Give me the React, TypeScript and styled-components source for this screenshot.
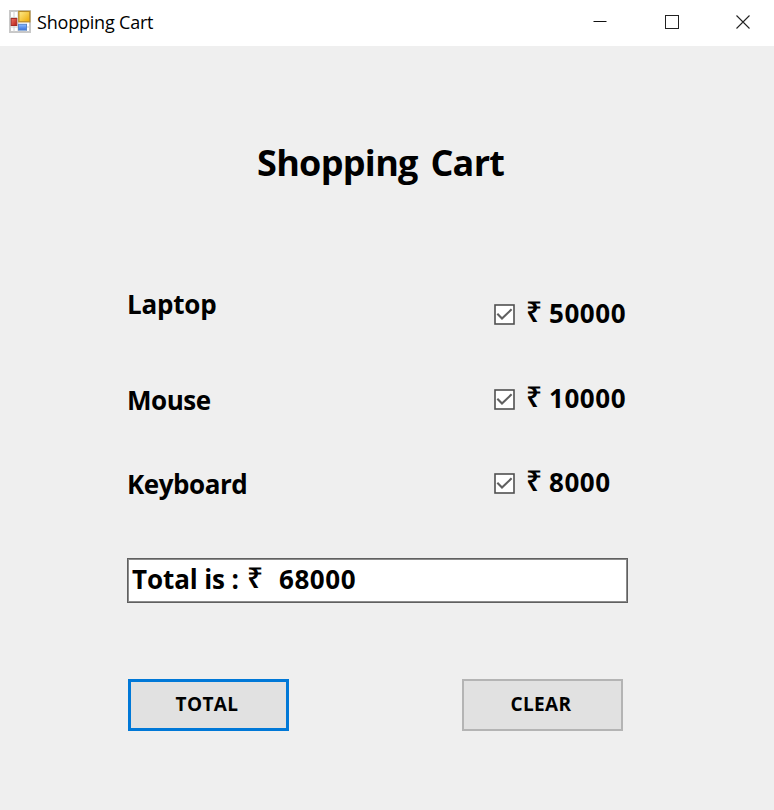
import React, { useState } from "react";
import styled, { createGlobalStyle } from "styled-components";

const GlobalStyle = createGlobalStyle`
  *, *::before, *::after { box-sizing: border-box; }
  body { margin: 0; background: #efefef; }
`;

const Window = styled.div`
  width: 774px;
  height: 810px;
  display: flex;
  flex-direction: column;
  background: #efefef;
  color: #000;
  font-family: "Open Sans", "Noto Sans", sans-serif;
  overflow: hidden;
`;

const TitleBar = styled.header`
  height: 46px;
  flex: none;
  display: flex;
  align-items: center;
  background: #fff;
  padding: 0 0 3px 9px;
`;

const TitleText = styled.span`
  flex: 1;
  margin-left: 6px;
  padding-top: 1px;
  font-size: 18px;
  line-height: 24px;
  letter-spacing: -0.2px;
  white-space: pre;
`;

const WindowControls = styled.div`
  display: flex;
  align-self: stretch;
  margin-right: -5px;
`;

const ControlButton = styled.button`
  width: 71.5px;
  padding: 0;
  border: 0;
  background: transparent;
  display: flex;
  align-items: center;
  justify-content: center;
`;

const Form = styled.main`
  flex: 1;
  display: flex;
  flex-direction: column;
  padding: 92px 146px 0 127px;
`;

const Heading = styled.h1`
  margin: 0 0 0 130px;
  height: 50px;
  font-size: 36px;
  font-weight: 700;
  line-height: 50px;
  letter-spacing: -0.7px;
  word-spacing: 4px;
  white-space: pre;
`;

const Items = styled.section`
  display: flex;
  justify-content: space-between;
  height: 272px;
  margin-top: 98px;
`;

const Column = styled.div<{ $width: number }>`
  width: ${(p) => p.$width}px;
  display: flex;
  flex-direction: column;
`;

const Label = styled.span<{ $gap: number; $spacing: number }>`
  height: 36px;
  margin-top: ${(p) => p.$gap}px;
  font-size: 26px;
  font-weight: 700;
  line-height: 36px;
  letter-spacing: ${(p) => p.$spacing}px;
  white-space: pre;
`;

const PriceRow = styled.label<{ $gap: number }>`
  height: 36px;
  margin-top: ${(p) => p.$gap}px;
  display: flex;
  align-items: center;
`;

const CheckInput = styled.input`
  appearance: none;
  width: 0;
  height: 0;
  margin: 0;
`;

const CheckIcon = styled.svg`
  width: 21px;
  height: 21px;
  flex: none;
  margin: 3px 11px 0 0;
`;

const Rupee = styled.span<{ $width: number }>`
  width: ${(p) => p.$width}px;
  flex: none;
  font-size: 28px;
  font-weight: 600;
  line-height: 33px;
  height: 36px;
`;

const Amount = styled.span`
  font-size: 26px;
  font-weight: 700;
  line-height: 36px;
  letter-spacing: 0.55px;
  white-space: pre;
`;

const TotalBox = styled.output`
  width: 501px;
  height: 45px;
  display: flex;
  align-items: center;
  margin-bottom: 76px;
  padding: 0 0 3px 4px;
  border: 1px solid #606060;
  box-shadow: inset 0 0 0 1px #8c8c8c;
  background: #fff;
`;

const TotalLabel = styled.span`
  width: 115px;
  font-size: 26px;
  font-weight: 700;
  line-height: 36px;
  letter-spacing: -0.1px;
  white-space: pre;
`;

const Actions = styled.div`
  display: flex;
  gap: 173px;
  padding-left: 1px;
`;

const ActionButton = styled.button<{ $primary?: boolean }>`
  width: 161px;
  height: 52px;
  padding: 0 3px 2px 0;
  border: ${(p) => (p.$primary ? "3px solid #0078d7" : "2px solid #b4b4b4")};
  background: #e1e1e1;
  color: #000;
  font-family: inherit;
  font-size: 19px;
  font-weight: 700;
  line-height: 26px;
  letter-spacing: 0.4px;
`;

const AppIcon = () => (
  <svg width="22" height="23" viewBox="0 0 22 23">
    <defs>
      <linearGradient id="gold" x1="0" y1="0" x2="1" y2="1">
        <stop offset="0" stopColor="#ffed91" />
        <stop offset="1" stopColor="#eda800" />
      </linearGradient>
      <linearGradient id="red" x1="0" y1="0" x2="1" y2="1">
        <stop offset="0" stopColor="#ef756a" />
        <stop offset="1" stopColor="#b51c12" />
      </linearGradient>
      <linearGradient id="blue" x1="0" y1="0" x2="0" y2="1">
        <stop offset="0" stopColor="#8ebdff" />
        <stop offset="1" stopColor="#386fdc" />
      </linearGradient>
    </defs>
    <rect x="1" y="1" width="20" height="21" fill="#fff" stroke="#c8c8c8" strokeWidth="2" />
    <path d="M1 7.5H8M1 17H21M5 1V22M9 1V22M17.5 14V22" stroke="#d0d0d0" strokeWidth="1" />
    <rect x="9.8" y="1.4" width="11" height="10.4" fill="url(#gold)" stroke="#b88a26" strokeWidth="1.3" />
    <rect x="2.2" y="8.5" width="5.6" height="7" fill="url(#red)" stroke="#a42c28" />
    <rect x="9.5" y="14.3" width="8" height="5.8" fill="url(#blue)" stroke="#5785ca" />
  </svg>
);

const Check = ({ on }: { on: boolean }) => (
  <CheckIcon viewBox="0 0 21 21">
    <rect x="1" y="1" width="19" height="19" fill="#fff" stroke="#505050" strokeWidth="1.6" />
    {on && <path d="M3.3 9.8L8 14.6L17.6 5.3" fill="none" stroke="#606060" strokeWidth="2.1" />}
  </CheckIcon>
);

const products = [
  { name: "Laptop", price: 50000, labelGap: 0, priceGap: 9, spacing: -0.2 },
  { name: "Mouse", price: 10000, labelGap: 60, priceGap: 49, spacing: -0.45 },
  { name: "Keyboard", price: 8000, labelGap: 48, priceGap: 48, spacing: -0.45 },
];

export default function App() {
  const [picked, setPicked] = useState([true, true, true]);
  const [total, setTotal] = useState<number | null>(68000);

  const toggle = (index: number) =>
    setPicked(picked.map((value, i) => (i === index ? !value : value)));
  const sum = () =>
    setTotal(products.reduce((acc, p, i) => acc + (picked[i] ? p.price : 0), 0));
  const clear = () => {
    setPicked([false, false, false]);
    setTotal(null);
  };

  return (
    <Window>
      <GlobalStyle />
      <TitleBar>
        <AppIcon />
        <TitleText>Shopping Cart</TitleText>
        <WindowControls>
          <ControlButton aria-label="Minimize">
            <svg width="14" height="14" viewBox="0 0 14 14">
              <path d="M0.5 6.5H13.5" stroke="#111" />
            </svg>
          </ControlButton>
          <ControlButton aria-label="Maximize">
            <svg width="14" height="14" viewBox="0 0 14 14">
              <rect x="0.5" y="0.5" width="13" height="13" fill="none" stroke="#222" />
            </svg>
          </ControlButton>
          <ControlButton aria-label="Close">
            <svg width="14" height="14" viewBox="0 0 14 14">
              <path d="M0.5 0.5L13.5 13.5M13.5 0.5L0.5 13.5" stroke="#222" strokeWidth="1.1" />
            </svg>
          </ControlButton>
        </WindowControls>
      </TitleBar>
      <Form>
        <Heading>Shopping Cart</Heading>
        <Items>
          <Column $width={160}>
            {products.map((p) => (
              <Label key={p.name} $gap={p.labelGap} $spacing={p.spacing}>
                {p.name}
              </Label>
            ))}
          </Column>
          <Column $width={134}>
            {products.map((p, i) => (
              <PriceRow key={p.name} $gap={p.priceGap}>
                <CheckInput type="checkbox" checked={picked[i]} onChange={() => toggle(i)} />
                <Check on={picked[i]} />
                <Rupee $width={23}>₹</Rupee>
                <Amount>{p.price}</Amount>
              </PriceRow>
            ))}
          </Column>
        </Items>
        <TotalBox>
          {total !== null && (
            <>
              <TotalLabel>Total is :</TotalLabel>
              <Rupee $width={32}>₹</Rupee>
              <Amount>{total}</Amount>
            </>
          )}
        </TotalBox>
        <Actions>
          <ActionButton $primary onClick={sum}>TOTAL</ActionButton>
          <ActionButton onClick={clear}>CLEAR</ActionButton>
        </Actions>
      </Form>
    </Window>
  );
}
